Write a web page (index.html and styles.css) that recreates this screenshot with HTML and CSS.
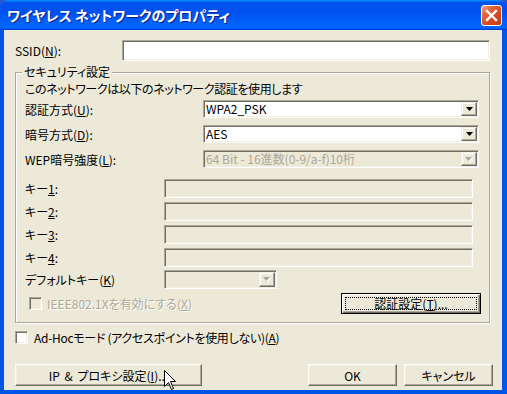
FILE: index.html
```html
<!DOCTYPE html>
<html lang="ja">
<head>
<meta charset="utf-8">
<title>ワイヤレス ネットワークのプロパティ</title>
<link rel="stylesheet" href="styles.css">
</head>
<body>
<div class="window">
  <div class="titlebar">
    <span class="title">ワイヤレス ネットワークのプロパティ</span>
    <span class="close">
      <svg width="21" height="21" viewBox="0 0 21 21"><path d="M6 6 L15 15 M15 6 L6 15" stroke="#fff" stroke-width="2.4" stroke-linecap="square"/></svg>
    </span>
  </div>
  <div class="frame">
    <div class="content">
      <div class="row ssid-row">
        <span class="lbl-ssid">SSID(<u>N</u>):</span>
        <span class="edit ssid-edit"></span>
      </div>

      <fieldset class="group">
        <legend>セキュリティ設定</legend>
        <p class="desc">このネットワークは以下のネットワーク認証を使用します</p>

        <div class="row combo-row first">
          <span class="lbl-combo">認証方式(<u>U</u>):</span>
          <span class="combo">
            <span class="combo-text">WPA2_PSK</span>
            <span class="drop"><svg width="7" height="4" viewBox="0 0 7 4"><path d="M0 0H7L3.5 4Z" fill="#000"/></svg></span>
          </span>
        </div>
        <div class="row combo-row">
          <span class="lbl-combo">暗号方式(<u>D</u>):</span>
          <span class="combo">
            <span class="combo-text">AES</span>
            <span class="drop"><svg width="7" height="4" viewBox="0 0 7 4"><path d="M0 0H7L3.5 4Z" fill="#000"/></svg></span>
          </span>
        </div>
        <div class="row combo-row">
          <span class="lbl-combo">WEP暗号強度(<u>L</u>):</span>
          <span class="combo disabled">
            <span class="combo-text">64 Bit - 16進数(0-9/a-f)10桁</span>
            <span class="drop"><svg width="8" height="5" viewBox="0 0 8 5"><path d="M1 1H8L4.5 5Z" fill="#fff"/><path d="M0 0H7L3.5 4Z" fill="#ACA899"/></svg></span>
          </span>
        </div>

        <div class="row key-row first-key">
          <span class="lbl-key">キー<u>1</u>:</span>
          <span class="edit key-edit"></span>
        </div>
        <div class="row key-row">
          <span class="lbl-key">キー<u>2</u>:</span>
          <span class="edit key-edit"></span>
        </div>
        <div class="row key-row">
          <span class="lbl-key">キー<u>3</u>:</span>
          <span class="edit key-edit"></span>
        </div>
        <div class="row key-row">
          <span class="lbl-key">キー<u>4</u>:</span>
          <span class="edit key-edit"></span>
        </div>
        <div class="row key-row default-row">
          <span class="lbl-key">デフォルトキー(<u>K</u>)</span>
          <span class="combo disabled small">
            <span class="combo-text"></span>
            <span class="drop"><svg width="8" height="5" viewBox="0 0 8 5"><path d="M1 1H8L4.5 5Z" fill="#fff"/><path d="M0 0H7L3.5 4Z" fill="#ACA899"/></svg></span>
          </span>
        </div>

        <div class="row ieee-row">
          <span class="chk chk-disabled"></span>
          <span class="chk-label disabled-text">IEEE802.1Xを有効にする(<u>X</u>)</span>
          <span class="btn btn-default"><span class="focus">認証設定(<u>T</u>)...</span></span>
        </div>
      </fieldset>

      <div class="row adhoc-row">
        <span class="chk"></span>
        <span class="chk-label adhoc-label">Ad-Hocモード (アクセスポイントを使用しない)(<u>A</u>)</span>
      </div>

      <div class="row button-row">
        <span class="btn btn-ip">IP &amp; プロキシ設定(<u>I</u>)...</span>
        <span class="btn-pair">
          <span class="btn btn-sm">OK</span>
          <span class="btn btn-sm">キャンセル</span>
        </span>
      </div>
    </div>
  </div>
  <svg class="cursor" width="13" height="21" viewBox="0 0 13 21"><path d="M0.5 0.5 L0.5 16.5 L4.5 12.5 L7.5 19.5 L9.5 18.5 L6.5 11.5 L11.5 11.5 Z" fill="#fff" stroke="#000" stroke-width="1" stroke-linejoin="miter"/></svg>
</div>
</body>
</html>
```
FILE: styles.css
```css
* { box-sizing: border-box; }
html, body { margin: 0; padding: 0; }
body {
  width: 507px;
  height: 394px;
  overflow: hidden;
  background: #2A56C6;
  font-family: "Noto Sans CJK JP", "Liberation Sans", sans-serif;
  font-size: 12px;
  color: #000;
  font-feature-settings: "palt";
}
u { text-decoration: underline; text-underline-offset: 1px; }

.window {
  position: relative;
  width: 507px;
  height: 394px;
  display: flex;
  flex-direction: column;
}

.titlebar {
  flex: none;
  height: 30px;
  border-radius: 8px 8px 0 0;
  background: linear-gradient(180deg, #0997ff, #0053ee 8%, #0050ee 40%, #06f 88%, #06f 93%, #005bff 95%, #003dd7 96%, #003dd7);
  display: flex;
  align-items: center;
  justify-content: space-between;
  padding: 0 5px 0 7px;
}
.title {
  color: #fff;
  font-weight: bold;
  font-size: 14px;
  line-height: 16px;
  text-shadow: 1px 1px 0 #0A1E8A;
}
.close {
  width: 21px;
  height: 21px;
  border: 1px solid #fff;
  border-radius: 3px;
  background: linear-gradient(135deg, #F2A58A 0%, #E4673F 28%, #D84A20 60%, #C23A10 100%);
  display: flex;
  align-items: center;
  justify-content: center;
}
.close svg { display: block; margin: -1px; }

.frame {
  flex: 1;
  background: #ECE9D8;
  border-style: solid;
  border-color: #0055E6;
  border-width: 0 5px 4px 4px;
}
.content {
  padding: 10px 9px 0 11px;
}

.row {
  display: flex;
  align-items: center;
}

.edit {
  display: block;
  border: 1px solid;
  border-color: #ACA899 #fff #fff #ACA899;
  box-shadow: inset 1px 1px 0 #716F64, inset -1px -1px 0 #F1EFE2;
  background: #fff;
}

.ssid-row { height: 21px; }
.lbl-ssid { width: 107px; flex: none; }
.ssid-edit { width: 368px; height: 21px; }

.group {
  margin: 4px 0 0 0;
  padding: 0 8px 8px 9px;
  width: 475px;
  min-width: 0;
  border: 1px solid #ACA899;
  box-shadow: inset 1px 1px 0 #fff, 1px 1px 0 #fff;
}
.group legend {
  padding: 0 2px;
  margin-left: -3px;
  line-height: 14px;
  background: #ECE9D8;
}
.desc {
  margin: 3px 0 0 0;
  line-height: 14px;
  white-space: nowrap;
  letter-spacing: -0.4px;
}

.combo-row { height: 18px; margin-top: 7px; }
.combo-row.first { margin-top: 4px; }
.lbl-combo { width: 178px; flex: none; }

.combo {
  display: flex;
  width: 276px;
  height: 18px;
  border: 1px solid;
  border-color: #ACA899 #fff #fff #ACA899;
  box-shadow: inset 1px 1px 0 #716F64, inset -1px -1px 0 #F1EFE2;
  background: #fff;
}
.combo-text {
  flex: 1;
  padding-left: 2px;
  line-height: 16px;
  white-space: nowrap;
  overflow: hidden;
}
.drop {
  flex: none;
  width: 16px;
  margin: 1px;
  background: #ECE9D8;
  border: 1px solid;
  border-color: #F1EFE2 #716F64 #716F64 #F1EFE2;
  box-shadow: inset -1px -1px 0 #ACA899, inset 1px 1px 0 #fff;
  display: flex;
  align-items: center;
  justify-content: center;
}
.drop svg { display: block; }
.combo.disabled { background: #ECE9D8; }
.combo.disabled .combo-text { color: #ACA899; }
.combo.small { width: 113px; height: 19px; }

.key-row { height: 19px; margin-top: 4px; }
.key-row.first-key { margin-top: 11px; }
.key-row.default-row { margin-top: 3px; }
.lbl-key { width: 139px; flex: none; white-space: nowrap; }
.key-edit { width: 309px; height: 19px; background: #ECE9D8; }

.chk {
  flex: none;
  width: 13px;
  height: 13px;
  border: 1px solid;
  border-color: #ACA899 #fff #fff #ACA899;
  box-shadow: inset 1px 1px 0 #716F64, inset -1px -1px 0 #F1EFE2;
  background: #fff;
}
.chk-disabled { background: #ECE9D8; }
.disabled-text { color: #ACA899; text-shadow: 1px 1px 0 #fff; }

.ieee-row { height: 21px; margin-top: 4px; }
.ieee-row .chk { margin-left: 4px; }
.chk-label { margin-left: 5px; white-space: nowrap; }

.btn {
  display: flex;
  align-items: center;
  justify-content: center;
  flex: none;
  background: #ECE9D8;
  border: 1px solid;
  border-color: #fff #716F64 #716F64 #fff;
  box-shadow: inset -1px -1px 0 #ACA899, inset 1px 1px 0 #F1EFE2;
  white-space: nowrap;
}
.btn-default {
  margin-left: auto;
  width: 140px;
  height: 21px;
  padding: 3px;
  border: 1px solid #000;
  box-shadow: inset 1px 1px 0 #fff, inset -1px -1px 0 #716F64, inset -2px -2px 0 #ACA899, inset 2px 2px 0 #F1EFE2;
}
.focus {
  flex: 1;
  align-self: stretch;
  border: 1px dotted #000;
  display: flex;
  align-items: center;
  justify-content: center;
  line-height: 12px;
}

.adhoc-row { height: 14px; margin-top: 7px; }
.adhoc-label { margin-left: 6px; letter-spacing: -0.3px; }

.button-row {
  margin-top: 20px;
  justify-content: space-between;
}
.btn-ip { width: 187px; height: 22px; word-spacing: 2px; }
.btn-pair { display: flex; gap: 7px; }
.btn-sm { width: 89px; height: 22px; }

.cursor {
  position: absolute;
  left: 164px;
  top: 370px;
}
```
